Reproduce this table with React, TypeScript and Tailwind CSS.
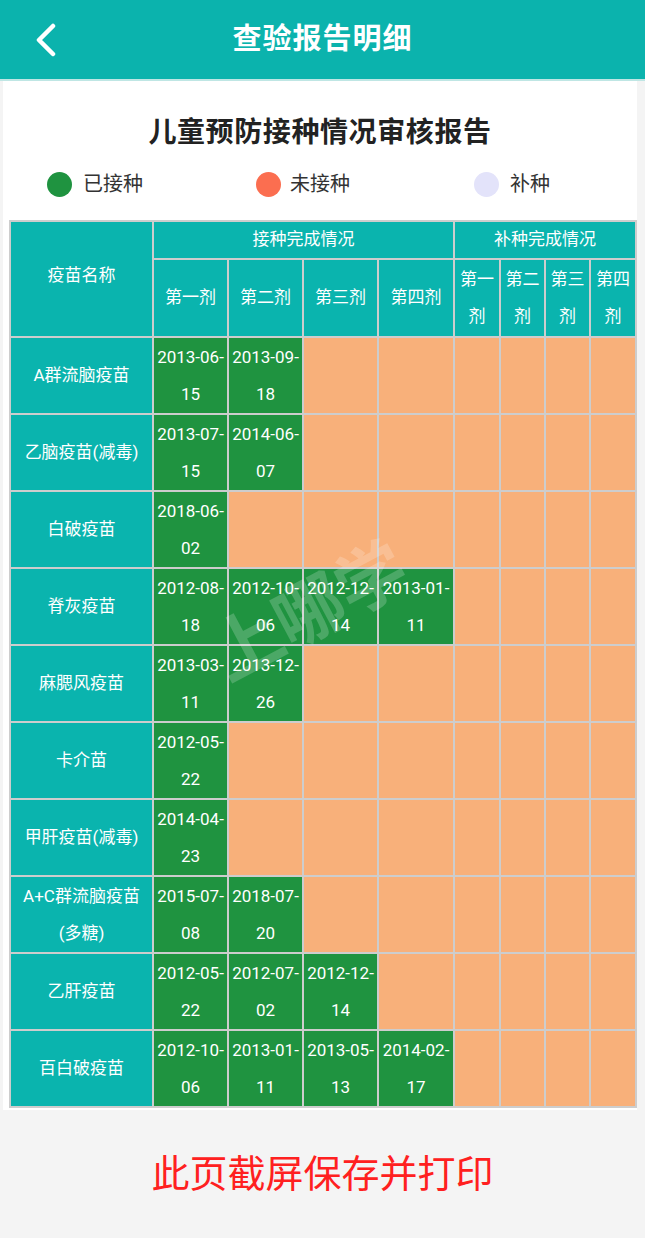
import React from 'react';

interface Vaccine { name: string[]; doses: string[]; }

const vaccines: Vaccine[] = [
  { name: ['A群流脑疫苗'], doses: ['2013-06-15', '2013-09-18'] },
  { name: ['乙脑疫苗(减毒)'], doses: ['2013-07-15', '2014-06-07'] },
  { name: ['白破疫苗'], doses: ['2018-06-02'] },
  { name: ['脊灰疫苗'], doses: ['2012-08-18', '2012-10-06', '2012-12-14', '2013-01-11'] },
  { name: ['麻腮风疫苗'], doses: ['2013-03-11', '2013-12-26'] },
  { name: ['卡介苗'], doses: ['2012-05-22'] },
  { name: ['甲肝疫苗(减毒)'], doses: ['2014-04-23'] },
  { name: ['A+C群流脑疫苗', '(多糖)'], doses: ['2015-07-08', '2018-07-20'] },
  { name: ['乙肝疫苗'], doses: ['2012-05-22', '2012-07-02', '2012-12-14'] },
  { name: ['百白破疫苗'], doses: ['2012-10-06', '2013-01-11', '2013-05-13', '2014-02-17'] },
];

const doseNames = ['第一剂', '第二剂', '第三剂', '第四剂'];
const suppNames = ['第一', '第二', '第三', '第四'];

const cell = 'border-2 border-[#cdcdcd] text-center align-middle';

const App: React.FC = () => {
  return (
    <div
      className="min-h-[1238px] w-[645px] bg-[#f4f4f4] relative overflow-hidden"
      style={{ fontFamily: 'Roboto, "Noto Sans CJK SC", sans-serif' }}
    >
      {/* top bar */}
      <div className="h-[79px] bg-[#0bb3ad] flex items-center relative">
        <svg className="absolute left-[33px] top-[23px]" width="26" height="34" viewBox="0 0 26 34">
          <path d="M20 3 L6 17 L20 31" fill="none" stroke="white" strokeWidth="4.5" strokeLinecap="round" strokeLinejoin="round" />
        </svg>
        <div className="w-full text-center text-white text-[29px] font-bold tracking-[1px]">查验报告明细</div>
      </div>
      <div className="h-[2px] bg-[#bfe6e4]" />

      {/* card */}
      <div className="ml-[3px] w-[634px] bg-white pb-[2px]">
        <div className="pt-[33px] h-[71px] text-center text-[28px] leading-[38px] font-bold text-[#222] tracking-[0.6px]">
          儿童预防接种情况审核报告
        </div>

        <div className="mt-[17px] pl-[44px] grid grid-cols-[209px_218px_auto] items-center h-[26px] text-[20px] text-[#333]">
          <div className="flex items-center gap-[11px]">
            <span className="w-[25px] h-[25px] rounded-full bg-[#1f9340]" />
            <span>已接种</span>
          </div>
          <div className="flex items-center gap-[9px]">
            <span className="w-[25px] h-[25px] rounded-full bg-[#fb6e50]" />
            <span>未接种</span>
          </div>
          <div className="flex items-center gap-[11px]">
            <span className="w-[25px] h-[25px] rounded-full bg-[#e3e3fa]" />
            <span>补种</span>
          </div>
        </div>

        <table className="mt-[25px] ml-[6px] w-[626px] table-fixed border-collapse text-[17px] text-white">
          <colgroup>
            <col className="w-[143px]" />
            <col className="w-[75px]" />
            <col className="w-[75px]" />
            <col className="w-[75px]" />
            <col className="w-[76px]" />
            <col className="w-[46px]" />
            <col className="w-[45px]" />
            <col className="w-[45px]" />
            <col className="w-[46px]" />
          </colgroup>
          <thead>
            <tr className="h-[38px] bg-[#0ab4ae]">
              <th rowSpan={2} className={`${cell} font-normal pb-[6px]`}>疫苗名称</th>
              <th colSpan={4} className={`${cell} font-normal`}>接种完成情况</th>
              <th colSpan={4} className={`${cell} font-normal`}>补种完成情况</th>
            </tr>
            <tr className="h-[78px] bg-[#0ab4ae]">
              {doseNames.map(d => (
                <th key={d} className={`${cell} font-normal px-0`}>{d}</th>
              ))}
              {suppNames.map(d => (
                <th key={d} className={`${cell} font-normal px-0 leading-[37px]`}>
                  {d}<br />剂
                </th>
              ))}
            </tr>
          </thead>
          <tbody>
            {vaccines.map(v => (
              <tr key={v.name.join('')} className="h-[77px]">
                <td className={`${cell} bg-[#0ab4ae] leading-[37px]`}>
                  {v.name.map((n, i) => (
                    <React.Fragment key={n}>{i > 0 && <br />}{n}</React.Fragment>
                  ))}
                </td>
                {[0, 1, 2, 3].map(i => {
                  const d = v.doses[i];
                  return d ? (
                    <td key={i} className={`${cell} bg-[#1f9340] text-[17px] leading-[37px] whitespace-nowrap px-0`}>
                      {d.slice(0, 8)}<br />{d.slice(8)}
                    </td>
                  ) : (
                    <td key={i} className={`${cell} bg-[#f8b07a]`} />
                  );
                })}
                {[0, 1, 2, 3].map(i => (
                  <td key={`s${i}`} className={`${cell} bg-[#f8b07a]`} />
                ))}
              </tr>
            ))}
          </tbody>
        </table>
      </div>

      {/* footer note */}
      <div className="h-[128px] flex items-center justify-center text-[38px] text-[#ff2020]">
        此页截屏保存并打印
      </div>

      {/* watermark */}
      <div className="absolute left-[205px] top-[560px] -rotate-[28deg] text-[70px] font-bold text-white/20 pointer-events-none select-none">
        上哪学
      </div>
    </div>
  );
};

export default App;
